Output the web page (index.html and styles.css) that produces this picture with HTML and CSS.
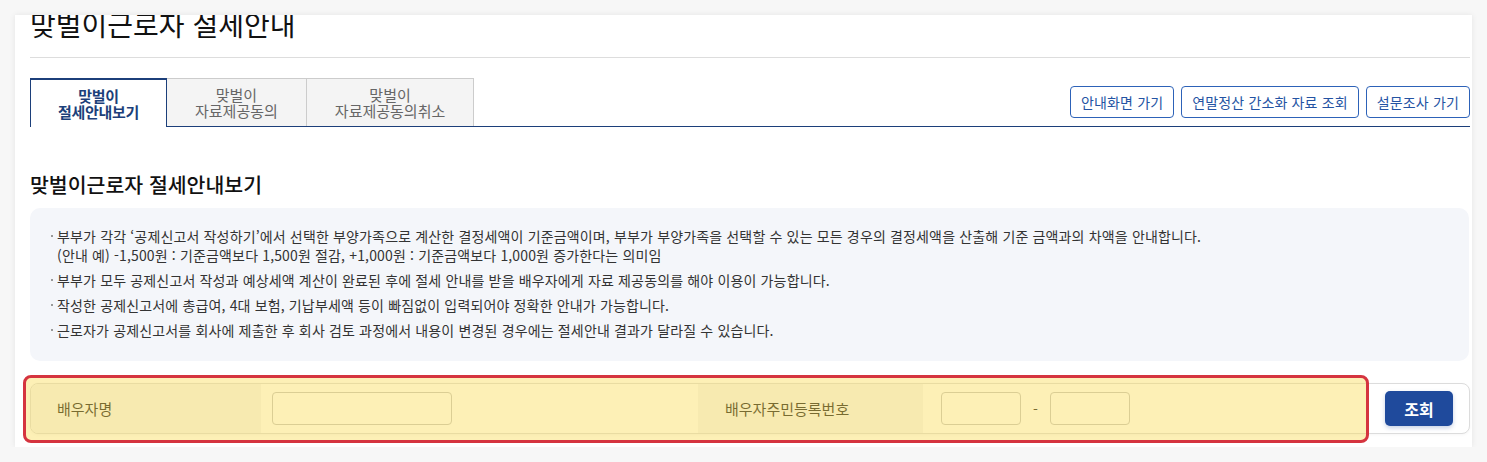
FILE: index.html
```html
<!DOCTYPE html>
<html lang="ko">
<head>
  <meta charset="UTF-8">
  <meta name="viewport" content="width=device-width, initial-scale=1.0">
  <title>맞벌이근로자 절세안내</title>
  <link rel="stylesheet" href="styles.css">
</head>
<body>
  <div class="card">
    <!-- Page title -->
    <div class="title-bar">
      <h1 class="page-title">맞벌이근로자 절세안내</h1>
    </div>

    <!-- Tabs + quick links -->
    <div class="tab-bar">
      <ul class="tabs">
        <li class="tab active">맞벌이<br>절세안내보기</li>
        <li class="tab">맞벌이<br>자료제공동의</li>
        <li class="tab">맞벌이<br>자료제공동의취소</li>
      </ul>
      <div class="quick-links">
        <a href="#" class="btn-line">안내화면 가기</a>
        <a href="#" class="btn-line">연말정산 간소화 자료 조회</a>
        <a href="#" class="btn-line">설문조사 가기</a>
      </div>
    </div>

    <h2 class="section-title">맞벌이근로자 절세안내보기</h2>

    <div class="info-box">
      <ul class="info-list">
        <li>부부가 각각 ‘공제신고서 작성하기’에서 선택한 부양가족으로 계산한 결정세액이 기준금액이며, 부부가 부양가족을 선택할 수 있는 모든 경우의 결정세액을 산출해 기준 금액과의 차액을 안내합니다.<br>(안내 예) -1,500원 : 기준금액보다 1,500원 절감, +1,000원 : 기준금액보다 1,000원 증가한다는 의미임</li>
        <li>부부가 모두 공제신고서 작성과 예상세액 계산이 완료된 후에 절세 안내를 받을 배우자에게 자료 제공동의를 해야 이용이 가능합니다.</li>
        <li>작성한 공제신고서에 총급여, 4대 보험, 기납부세액 등이 빠짐없이 입력되어야 정확한 안내가 가능합니다.</li>
        <li>근로자가 공제신고서를 회사에 제출한 후 회사 검토 과정에서 내용이 변경된 경우에는 절세안내 결과가 달라질 수 있습니다.</li>
      </ul>
    </div>

    <!-- Spouse search -->
    <div class="search-wrap">
      <div class="search-row">
        <div class="cell-label">배우자명</div>
        <div class="cell-input">
          <input type="text" class="input-name">
        </div>
        <div class="cell-label">배우자주민등록번호</div>
        <div class="cell-input">
          <input type="text" class="input-rrn">
          <span class="dash">-</span>
          <input type="password" class="input-rrn">
        </div>
        <div class="cell-btn">
          <button class="btn-search">조회</button>
        </div>
      </div>
      <div class="highlight"></div>
    </div>
  </div>
</body>
</html>
```

FILE: styles.css
```css
:root {
  --navy: #1c3f7a;
  --blue: #2d62b8;
  --blue-text: #2453a3;
  --text: #333333;
  --text-light: #666666;
  --line: #dddddd;
  --info-bg: #f4f6fa;
}

* {
  box-sizing: border-box;
}

body {
  margin: 0;
  padding: 15px 15px 0 15px;
  background: #f7f7f7;
  font-family: "Noto Sans CJK KR", "Noto Sans", sans-serif;
  font-size: 14px;
  color: var(--text);
  letter-spacing: 0.15px;
}

.card {
  background: #ffffff;
  box-shadow: 0 0 6px rgba(0, 0, 0, 0.08);
  padding: 0 2px 13px 15px;
  overflow: hidden;
  width: 1457px;
}

/* Title */
.title-bar {
  border-bottom: 1px solid var(--line);
  padding-bottom: 16px;
}

.page-title {
  margin: -8px 0 0 0;
  font-size: 28px;
  line-height: 34px;
  font-weight: 400;
  color: #111111;
  letter-spacing: 0;
}

/* Tabs */
.tab-bar {
  display: flex;
  justify-content: space-between;
  align-items: flex-end;
  margin-top: 20px;
  border-bottom: 1px solid var(--navy);
  height: 49px;
}

.tabs {
  display: flex;
  list-style: none;
  margin: 0;
  padding: 0;
  height: 48px;
}

.tab {
  display: flex;
  align-items: center;
  justify-content: center;
  text-align: center;
  padding: 1px 28px 0;
  height: 48px;
  font-size: 15px;
  line-height: 16px;
  background: #f4f4f4;
  border: 1px solid #cccccc;
  border-bottom: none;
  border-left: none;
  color: var(--text-light);
  letter-spacing: 0;
}

.tab.active {
  background: #ffffff;
  border: 1px solid var(--navy);
  border-top-width: 2px;
  border-bottom: none;
  color: var(--navy);
  font-weight: 700;
  height: 49px;
  margin-bottom: -1px;
  padding: 0 27px;
  letter-spacing: -0.3px;
}

.quick-links {
  display: flex;
  gap: 7px;
  margin-bottom: 8px;
}

.btn-line {
  display: inline-flex;
  align-items: center;
  height: 32px;
  padding: 0 10px;
  border: 1px solid var(--blue);
  border-radius: 4px;
  color: var(--blue-text);
  text-decoration: none;
  background: #ffffff;
}

/* Section */
.section-title {
  margin: 43px 0 10px;
  font-size: 20.5px;
  line-height: 28px;
  font-weight: 500;
  color: #111111;
  letter-spacing: 0;
}

.info-box {
  background: var(--info-bg);
  border-radius: 10px;
  padding: 19px 20px 21px 18px;
  margin-right: 1px;
}

.info-list {
  list-style: none;
  margin: 0;
  padding: 0;
}

.info-list li {
  position: relative;
  padding-left: 9px;
  line-height: 19px;
  margin-top: 6px;
}

.info-list li:first-child {
  margin-top: 0;
}

.info-list li::before {
  content: "";
  position: absolute;
  left: 3px;
  top: 8px;
  width: 2px;
  height: 2px;
  background: #999999;
}

/* Search row */
.search-wrap {
  position: relative;
  margin-top: 22px;
}

.search-row {
  display: grid;
  grid-template-columns: 230px 437px 225px 1fr 100px;
  height: 51px;
  border: 1px solid #dcdcdc;
  border-radius: 8px;
  overflow: hidden;
  background: #ffffff;
  box-shadow: 0 1px 3px rgba(0, 0, 0, 0.04);
}

.cell-label {
  display: flex;
  align-items: center;
  padding-left: 26px;
  background: #f5f5f5;
  color: #1a1a1a;
  font-size: 15px;
  letter-spacing: 0;
}

.search-row .cell-label:nth-child(3) {
  padding-left: 27px;
}

.cell-input {
  display: flex;
  align-items: center;
  gap: 12px;
  padding-left: 11px;
}

.search-row .cell-input:nth-child(4) {
  padding-left: 18px;
}

input {
  height: 33px;
  border: 1px solid #c4c4c4;
  border-radius: 4px;
  background: #ffffff;
  font-family: inherit;
  font-size: 14px;
}

.input-name {
  width: 180px;
}

.input-rrn {
  width: 80px;
}

.dash {
  color: #1a1a1a;
}

.cell-btn {
  display: flex;
  align-items: center;
  justify-content: center;
}

.btn-search {
  width: 68px;
  height: 35px;
  border: none;
  border-radius: 5px;
  background: #1f4a9c;
  color: #ffffff;
  font-family: inherit;
  font-size: 16px;
  font-weight: 700;
  box-shadow: 0 2px 4px rgba(31, 74, 156, 0.25);
}

/* Annotation overlay */
.highlight {
  position: absolute;
  left: -7px;
  top: -8px;
  width: 1346px;
  height: 68px;
  border: 3px solid #d5343f;
  border-radius: 8px;
  background: rgba(250, 220, 80, 0.42);
  pointer-events: none;
}
```
